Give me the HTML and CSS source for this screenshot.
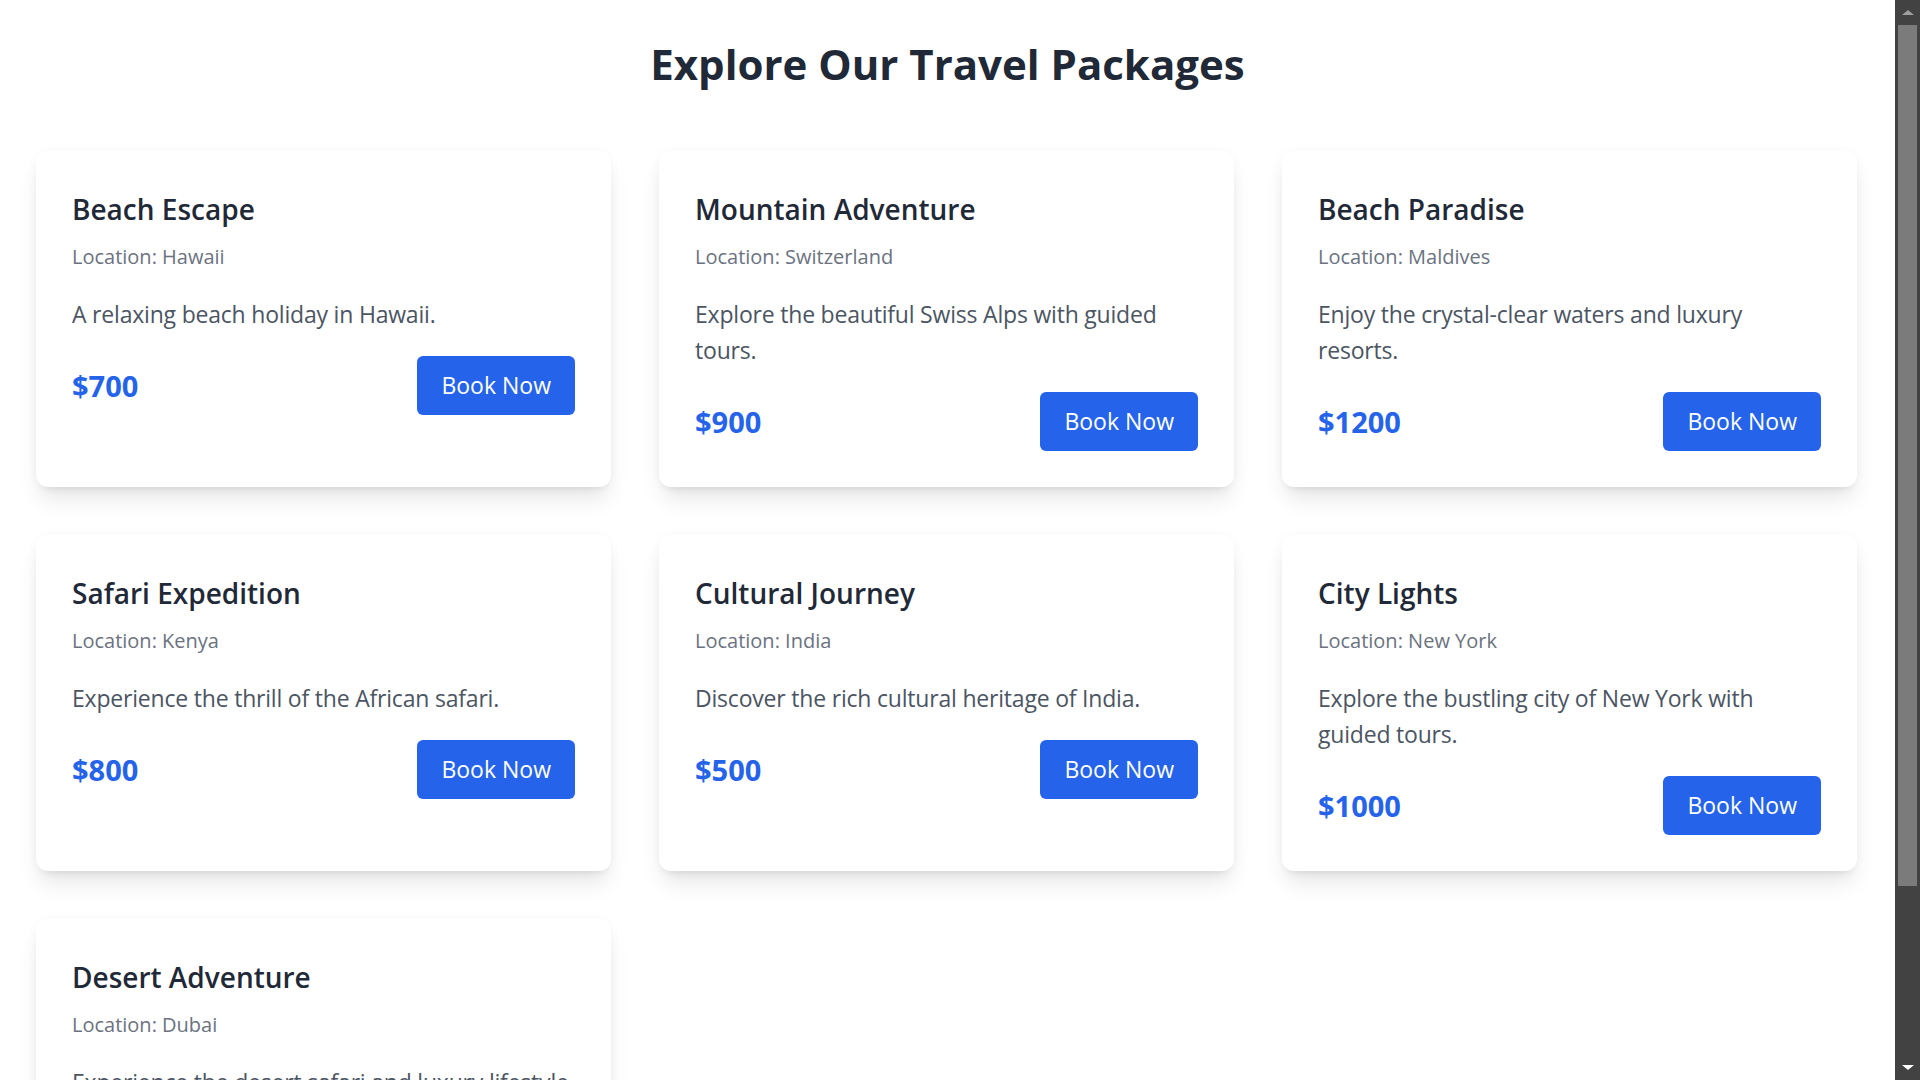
FILE: index.html
```html
<!DOCTYPE html>
<html lang="en">
<head>
<meta charset="utf-8">
<title>Travel Packages</title>
<link rel="stylesheet" href="styles.css">
</head>
<body>
<main class="page">
  <h1 class="page-title">Explore Our Travel Packages</h1>
  <div class="grid">
    <article class="card">
      <h2 class="card-title">Beach Escape</h2>
      <p class="card-loc">Location: Hawaii</p>
      <p class="card-desc">A relaxing beach holiday in Hawaii.</p>
      <div class="card-foot"><span class="price">$700</span><button class="btn">Book Now</button></div>
    </article>
    <article class="card">
      <h2 class="card-title">Mountain Adventure</h2>
      <p class="card-loc">Location: Switzerland</p>
      <p class="card-desc">Explore the beautiful Swiss Alps with guided tours.</p>
      <div class="card-foot"><span class="price">$900</span><button class="btn">Book Now</button></div>
    </article>
    <article class="card">
      <h2 class="card-title">Beach Paradise</h2>
      <p class="card-loc">Location: Maldives</p>
      <p class="card-desc">Enjoy the crystal-clear waters and luxury resorts.</p>
      <div class="card-foot"><span class="price">$1200</span><button class="btn">Book Now</button></div>
    </article>
    <article class="card">
      <h2 class="card-title">Safari Expedition</h2>
      <p class="card-loc">Location: Kenya</p>
      <p class="card-desc">Experience the thrill of the African safari.</p>
      <div class="card-foot"><span class="price">$800</span><button class="btn">Book Now</button></div>
    </article>
    <article class="card">
      <h2 class="card-title">Cultural Journey</h2>
      <p class="card-loc">Location: India</p>
      <p class="card-desc">Discover the rich cultural heritage of India.</p>
      <div class="card-foot"><span class="price">$500</span><button class="btn">Book Now</button></div>
    </article>
    <article class="card">
      <h2 class="card-title">City Lights</h2>
      <p class="card-loc">Location: New York</p>
      <p class="card-desc">Explore the bustling city of New York with guided tours.</p>
      <div class="card-foot"><span class="price">$1000</span><button class="btn">Book Now</button></div>
    </article>
    <article class="card">
      <h2 class="card-title">Desert Adventure</h2>
      <p class="card-loc">Location: Dubai</p>
      <p class="card-desc">Experience the desert safari and luxury lifestyle in Dubai.</p>
      <div class="card-foot"><span class="price">$1500</span><button class="btn">Book Now</button></div>
    </article>
  </div>
</main>
<div class="scrollbar" aria-hidden="true">
  <span class="scroll-up"></span>
  <span class="scroll-thumb"></span>
  <span class="scroll-down"></span>
</div>
</body>
</html>
```
FILE: styles.css
```css
html {
  background: #ffffff;
}
body {
  margin: 0;
  font-family: "Open Sans", "Noto Sans", "Liberation Sans", sans-serif;
  color: #1f2937;
}
.page {
  padding: 37px 61px 36px 36px;
}
.page-title {
  margin: 0 0 60px;
  text-align: center;
  font-size: 42px;
  line-height: 54px;
  font-weight: 700;
  color: #1f2937;
}
.grid {
  display: grid;
  grid-template-columns: repeat(3, 575px);
  gap: 48px;
}
.card {
  background: #ffffff;
  border-radius: 12px;
  padding: 37px 36px 36px;
  box-shadow: 0 15px 22px -4px rgba(0, 0, 0, 0.1), 0 6px 9px -6px rgba(0, 0, 0, 0.1), 0 0 12px rgba(0, 0, 0, 0.03);
}
.card-title {
  margin: 0 0 12px;
  font-size: 28px;
  line-height: 42px;
  font-weight: 600;
  color: #1f2937;
}
.card-loc {
  margin: 0;
  font-size: 20px;
  line-height: 30px;
  color: #6b7280;
}
.card-desc {
  margin: 24px 0 0;
  font-size: 23px;
  line-height: 36px;
  letter-spacing: -0.2px;
  color: #4b5563;
}
.card-foot {
  margin-top: 24px;
  display: flex;
  align-items: center;
  justify-content: space-between;
}
.price {
  font-size: 29px;
  line-height: 42px;
  font-weight: 700;
  color: #2563eb;
}
.btn {
  font-family: inherit;
  font-size: 23px;
  line-height: 35px;
  padding: 12px 24px;
  border: 0;
  border-radius: 6px;
  background: #2563eb;
  color: #ffffff;
  cursor: pointer;
}
.scrollbar {
  position: fixed;
  top: 0;
  right: 0;
  width: 25px;
  height: 100vh;
  background: #424242;
  display: flex;
  flex-direction: column;
  align-items: center;
}
.scroll-up,
.scroll-down {
  flex: 0 0 25px;
  display: flex;
  align-items: center;
  justify-content: center;
}
.scroll-up::before {
  content: "";
  border-left: 6px solid transparent;
  border-right: 6px solid transparent;
  border-bottom: 5px solid #9e9e9e;
}
.scroll-down {
  margin-top: auto;
}
.scroll-down::before {
  content: "";
  border-left: 6px solid transparent;
  border-right: 6px solid transparent;
  border-top: 5px solid #ffffff;
}
.scroll-thumb {
  width: 19px;
  height: 861px;
  background: #7b7b7b;
}
```
